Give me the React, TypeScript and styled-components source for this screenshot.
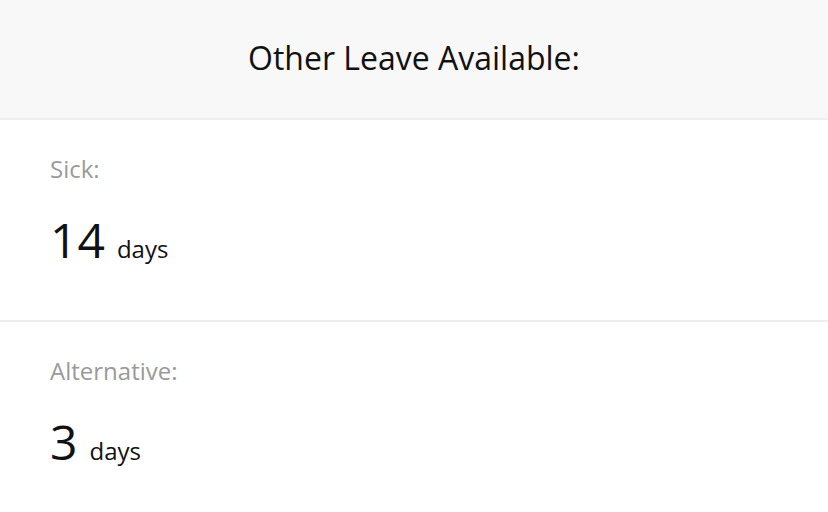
import { FunctionComponent } from 'react'
import styled, { createGlobalStyle } from 'styled-components'

const GlobalStyle = createGlobalStyle`
  body {
    margin: 0;
    background: #fff;
    font-family: 'Open Sans', 'Noto Sans', sans-serif;
  }
`

const Header = styled.div`
  height: 118px;
  background-color: #f8f8f8;
  border-bottom: 2px solid #eeeeee;
  display: flex;
  align-items: center;
  justify-content: center;
`

const Title = styled.h1`
  margin: 0 0 4px 0;
  font-size: 32px;
  font-weight: 400;
  color: #111;
`

const Section = styled.div`
  padding: 33px 50px 0 50px;
  height: 167px;
  border-bottom: ${(props: { last?: boolean }) => (props.last ? 'none' : '2px solid #eeeeee')};
`

const Label = styled.div`
  font-size: 24px;
  color: #9a9a9a;
  line-height: 32px;
`

const Value = styled.div`
  margin-top: 25px;
  display: flex;
  align-items: baseline;
  gap: 12px;
`

const Number = styled.span`
  font-size: 48px;
  color: #111;
  line-height: 60px;
`

const Unit = styled.span`
  font-size: 24px;
  color: #111;
`

const leave = [
  { name: 'Sick:', days: 14 },
  { name: 'Alternative:', days: 3 }
]

const App: FunctionComponent = () => (
  <>
    <GlobalStyle />
    <Header>
      <Title>Other Leave Available:</Title>
    </Header>
    {leave.map((item, i) => (
      <Section key={item.name} last={i === leave.length - 1}>
        <Label>{item.name}</Label>
        <Value>
          <Number>{item.days}</Number>
          <Unit>days</Unit>
        </Value>
      </Section>
    ))}
  </>
)

export default App
